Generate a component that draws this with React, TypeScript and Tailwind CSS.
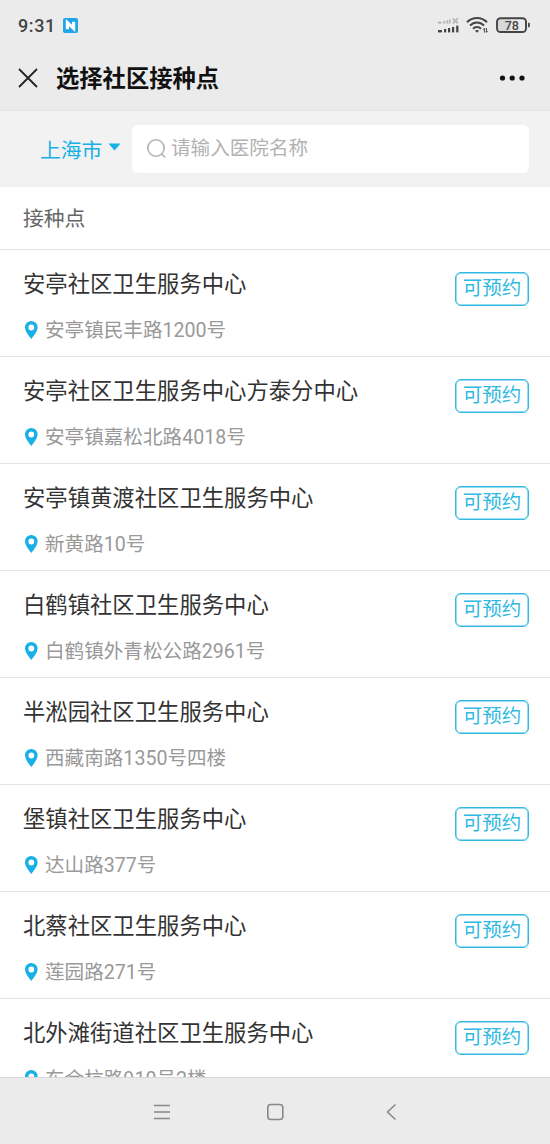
import React from "react";

interface Clinic {
  name: string;
  address: string;
}

const clinics: Clinic[] = [
  { name: "安亭社区卫生服务中心", address: "安亭镇民丰路1200号" },
  { name: "安亭社区卫生服务中心方泰分中心", address: "安亭镇嘉松北路4018号" },
  { name: "安亭镇黄渡社区卫生服务中心", address: "新黄路10号" },
  { name: "白鹤镇社区卫生服务中心", address: "白鹤镇外青松公路2961号" },
  { name: "半淞园社区卫生服务中心", address: "西藏南路1350号四楼" },
  { name: "堡镇社区卫生服务中心", address: "达山路377号" },
  { name: "北蔡社区卫生服务中心", address: "莲园路271号" },
  { name: "北外滩街道社区卫生服务中心", address: "东余杭路910号2楼" },
];

const StatusBar: React.FC = () => {
  return (
    <div className="flex h-[50px] items-center pl-[18px] pr-[19px] text-[#444]">
      <span className="w-[37px] pt-[2px] text-[18px] font-medium leading-none tracking-[0.6px]">9:31</span>
      <svg className="ml-[8px]" width="15" height="15" viewBox="0 0 15 15">
        <rect width="15" height="15" rx="2" fill="#20a5e8" />
        <path d="M4.4 11.3V4.6L10.6 10.4V3.7" fill="none" stroke="#fff" strokeWidth="3.2" />
      </svg>
      <svg className="ml-auto" width="23" height="18" viewBox="0 0 23 18">
        <g fill="#b5b5b5">
          <rect x="1" y="5.6" width="3.4" height="2" />
          <rect x="6.2" y="5" width="2" height="2.6" />
          <rect x="9.4" y="4.2" width="1.8" height="3.4" />
          <rect x="12" y="3.4" width="1.6" height="4.2" />
        </g>
        <path d="M15.8 2.4l5 5M20.8 2.4l-5 5" stroke="#b5b5b5" strokeWidth="1.7" />
        <g fill="#444">
          <rect x="1" y="14" width="4" height="2.4" />
          <rect x="7" y="13" width="2.2" height="3.4" />
          <rect x="11" y="12" width="2.2" height="4.4" />
          <rect x="15" y="11" width="2.2" height="5.4" />
          <rect x="19.2" y="9.6" width="2.2" height="6.8" />
        </g>
      </svg>
      <svg className="ml-[6px]" width="23" height="18" viewBox="0 0 23 18">
        <g fill="none" stroke="#444" strokeWidth="2">
          <path d="M1 6.2C6.5 .5 15.5 .5 21 6.2" />
          <path d="M4 9.5C8 5.4 14 5.4 18 9.5" />
          <path d="M7 12.7C9.3 10.4 12.7 10.4 15 12.7" />
        </g>
        <path d="M11 16.8l-2-2.1c1-.9 3-.9 4 0z" fill="#444" />
        <path d="M18.4 16.5v-4.3l-1.2 1.4M20.4 12v4.4l1.2-1.4" fill="none" stroke="#444" strokeWidth="1" />
      </svg>
      <svg className="ml-[6px]" width="36" height="18" viewBox="0 0 36 18">
        <rect x="3" y="3" width="13" height="12" fill="#d8d8d8" />
        <rect x="2" y="2.2" width="29" height="13.8" rx="3.5" fill="none" stroke="#444" strokeWidth="1.9" />
        <rect x="33" y="6.8" width="1.8" height="4.4" rx=".6" fill="#444" />
        <text x="16.8" y="13.5" textAnchor="middle" fontSize="12.5" fontWeight="500" fill="#444">
          78
        </text>
      </svg>
    </div>
  );
};

const TitleBar: React.FC = () => {
  return (
    <div className="flex h-[60px] items-center pb-[5px] pl-[18px] pr-[24px] text-[#111]">
      <svg width="20" height="20" viewBox="0 0 20 20" stroke="#222" strokeWidth="1.8">
        <path d="M1 1L19 19M19 1L1 19" />
      </svg>
      <h1 className="ml-[18px] pt-[5px] text-[23.3px] font-bold leading-none">选择社区接种点</h1>
      <svg className="ml-auto" width="28" height="6" viewBox="0 0 28 6" fill="#111">
        <circle cx="4.5" cy="3" r="2.6" />
        <circle cx="14.2" cy="3" r="2.6" />
        <circle cx="24" cy="3" r="2.6" />
      </svg>
    </div>
  );
};

const SearchBar: React.FC = () => {
  return (
    <div className="flex h-[76px] items-center bg-[#f2f2f2] pl-[40px] pr-[21px]">
      <div className="flex w-[92px] items-center text-[#18b0e6]">
        <span className="pt-[4px] text-[20.8px] leading-none">上海市</span>
        <svg className="mb-[3px] ml-[6px]" width="13" height="8" viewBox="0 0 13 8" fill="currentColor">
          <path d="M.5 .5h12L6.5 7.5z" />
        </svg>
      </div>
      <div className="flex h-[48px] flex-1 items-center rounded-md bg-white pl-[14px] text-[#b2b2b2]">
        <svg className="mb-[2px]" width="21" height="21" viewBox="0 0 21 21" fill="none" stroke="currentColor" strokeWidth="1.6">
          <circle cx="10" cy="10" r="8.2" />
          <path d="M15.5 16l3.8 3.3" />
        </svg>
        <span className="ml-[4px] text-[19.6px] leading-none">请输入医院名称</span>
      </div>
    </div>
  );
};

const ClinicRow: React.FC<Clinic> = ({ name, address }) => {
  return (
    <li className="flex h-[107px] shrink-0 justify-between border-b border-[#e4e4e4] pl-[23px] pr-[21px]">
      <div className="pt-[19px]">
        <div className="text-[22.35px] leading-[30px] text-[#333]">{name}</div>
        <div className="mt-[18px] flex items-center text-[19.6px] leading-[28px] text-[#999]">
          <svg className="mb-[2px] mr-[5px]" width="17" height="20" viewBox="0 0 17 20">
            <path
              d="M8.3 1a6.3 6.3 0 0 0-6.3 6.3c0 4.2 4 8.6 6.3 11.7 2.3-3.1 6.3-7.5 6.3-11.7A6.3 6.3 0 0 0 8.3 1zm0 3.6a2.9 2.9 0 1 1 0 5.8 2.9 2.9 0 0 1 0-5.8z"
              fill="#18b0e6"
            />
          </svg>
          <span>{address}</span>
        </div>
      </div>
      <div className="mt-[22px] flex h-[34px] w-[74px] justify-center rounded-md border border-[#30b9e2] text-[19.5px] leading-[32px] text-[#30b9e2] shadow-[inset_0_0_0_0.5px_#30b9e2]">
        可预约
      </div>
    </li>
  );
};

const BottomNav: React.FC = () => {
  return (
    <div className="flex h-[67px] shrink-0 items-center border-t border-[#d8d8d8] bg-[#ebebeb] pb-[1px] pl-[152px] pt-[3px]">
      <svg width="20" height="18" viewBox="0 0 20 18" stroke="#888" strokeWidth="1.5">
        <path d="M2 2.5h16M2 9h16M2 15.5h16" />
      </svg>
      <svg className="ml-[93px]" width="20" height="18" viewBox="0 0 20 18" fill="none" stroke="#888" strokeWidth="1.6">
        <rect x="2.8" y="1.5" width="15" height="15" rx="3" />
      </svg>
      <svg className="ml-[96px]" width="20" height="18" viewBox="0 0 20 18" fill="none" stroke="#888" strokeWidth="1.6">
        <path d="M14.5 1.5L6.5 9l8 7.5" />
      </svg>
    </div>
  );
};

const App: React.FC = () => {
  return (
    <div className="flex h-[1144px] w-[550px] flex-col overflow-hidden bg-white font-[Roboto,'Noto_Sans_CJK_SC',sans-serif]">
      <header className="shrink-0 border-b border-[#e6e6e6] bg-[#ebebeb]">
        <StatusBar />
        <TitleBar />
      </header>
      <SearchBar />
      <div className="flex h-[63px] shrink-0 items-center border-b border-[#e4e4e4] pl-[23px] pt-[4px] text-[20.8px] text-[#666]">
        接种点
      </div>
      <ul className="flex min-h-0 flex-1 flex-col overflow-hidden">
        {clinics.map((clinic) => (
          <ClinicRow key={clinic.name} {...clinic} />
        ))}
      </ul>
      <BottomNav />
    </div>
  );
};

export default App;
